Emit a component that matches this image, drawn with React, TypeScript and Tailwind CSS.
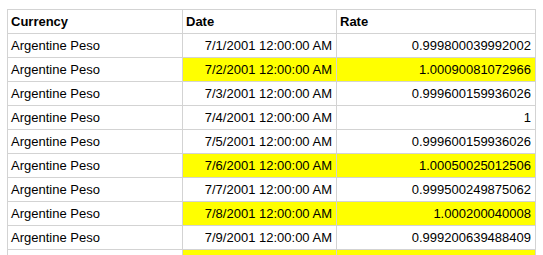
const rows = [
  { date: '7/1/2001 12:00:00 AM', rate: '0.999800039992002', hi: false },
  { date: '7/2/2001 12:00:00 AM', rate: '1.00090081072966', hi: true },
  { date: '7/3/2001 12:00:00 AM', rate: '0.999600159936026', hi: false },
  { date: '7/4/2001 12:00:00 AM', rate: '1', hi: false },
  { date: '7/5/2001 12:00:00 AM', rate: '0.999600159936026', hi: false },
  { date: '7/6/2001 12:00:00 AM', rate: '1.00050025012506', hi: true },
  { date: '7/7/2001 12:00:00 AM', rate: '0.999500249875062', hi: false },
  { date: '7/8/2001 12:00:00 AM', rate: '1.000200040008', hi: true },
  { date: '7/9/2001 12:00:00 AM', rate: '0.999200639488409', hi: false },
  { date: '7/10/2001 12:00:00 AM', rate: '1.00010001000100', hi: true },
];

const cell = 'h-[24px] flex items-center border-r border-b border-[#d3d3d3] leading-[15px]';

export default function App() {
  return (
    <div className="min-h-screen bg-white pl-[7px] pt-[9px] text-[13px] text-black" style={{ fontFamily: '"Liberation Sans", Arial, sans-serif' }}>
      <div className="w-[529px] grid grid-cols-[175px_154px_199px] border-l border-t border-[#d3d3d3]">
        <div className={`${cell} pl-[3px] font-bold`}>Currency</div>
        <div className={`${cell} pl-[3px] font-bold`}>Date</div>
        <div className={`${cell} pl-[3px] font-bold`}>Rate</div>
        {rows.map((r) => (
          <div key={r.date} className="contents">
            <div className={`${cell} pl-[3px]`}>Argentine Peso</div>
            <div className={`${cell} justify-end pr-[4px] ${r.hi ? 'bg-[#ffff00]' : ''}`}>{r.date}</div>
            <div className={`${cell} justify-end pr-[4px] ${r.hi ? 'bg-[#ffff00]' : ''}`}>{r.rate}</div>
          </div>
        ))}
      </div>
    </div>
  );
}
